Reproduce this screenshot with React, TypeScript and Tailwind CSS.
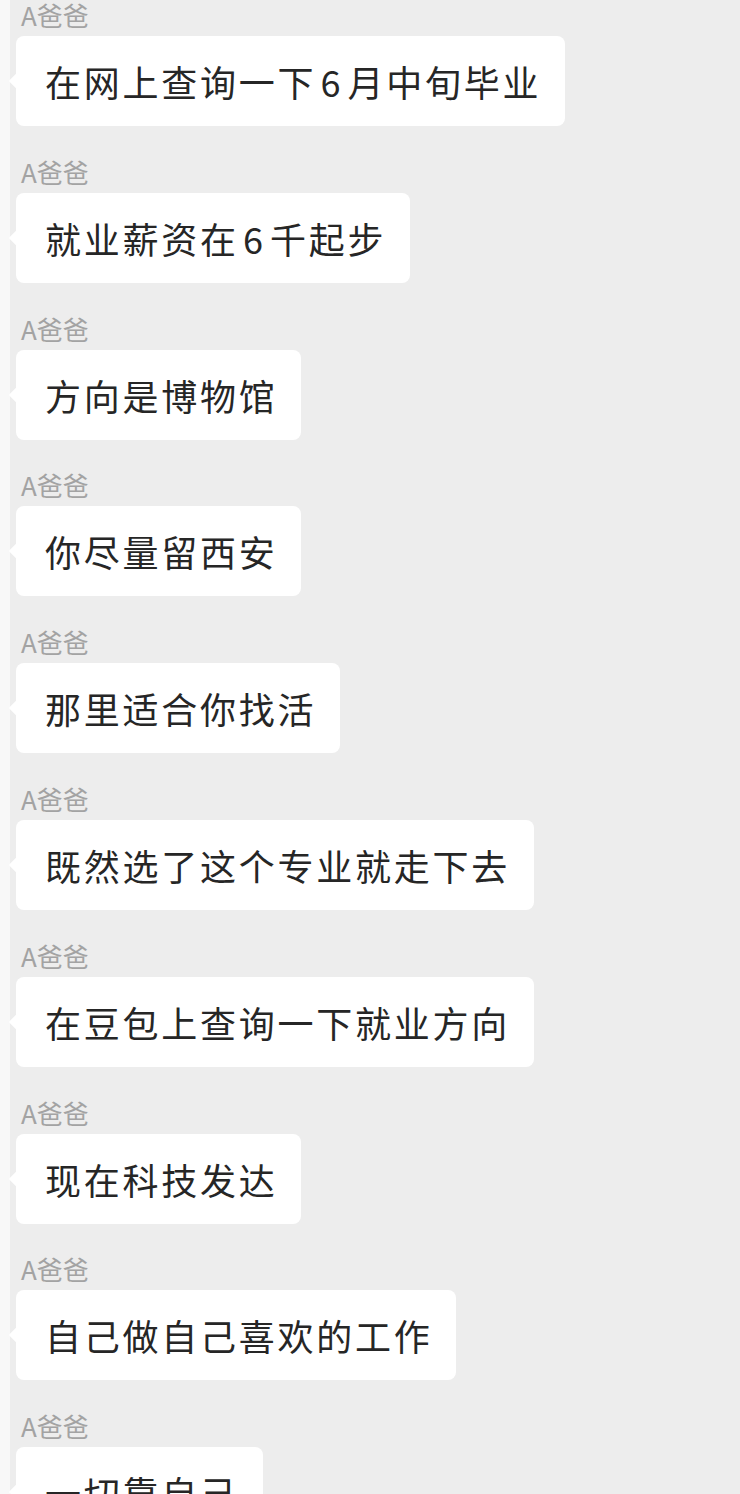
const messages = [
  '在网上查询一下6月中旬毕业',
  '就业薪资在6千起步',
  '方向是博物馆',
  '你尽量留西安',
  '那里适合你找活',
  '既然选了这个专业就走下去',
  '在豆包上查询一下就业方向',
  '现在科技发达',
  '自己做自己喜欢的工作',
  '一切靠自己'
];

// digits sit a little apart from the hanzi around them
function renderText(text: string) {
  return text.split(/(\d+)/).map((part, i) =>
    /^\d+$/.test(part) ? (
      <span key={i} className="px-[4.25px]">
        {part}
      </span>
    ) : (
      <span key={i}>{part}</span>
    )
  );
}

function Message({ text }: { text: string }) {
  return (
    <div className="flex flex-col items-start">
      <div className="h-[30px] pl-[5px] text-[26px] leading-[30px] text-[#a3a3a3]">A爸爸</div>
      <div className="relative mt-[6px] flex h-[90px] items-center rounded-[8px] bg-white pl-[29px] pr-[23.75px]">
        <span className="absolute left-[-5px] top-1/2 h-[11px] w-[11px] -translate-y-1/2 rotate-45 bg-white" />
        <span className="relative text-[36px] leading-none tracking-[2.75px] text-[#262626]">
          {renderText(text)}
        </span>
      </div>
    </div>
  );
}

export default function App() {
  return (
    <div
      className="flex h-[1494px] w-[740px] overflow-hidden bg-[#ededed]"
      style={{ fontFamily: '"Noto Sans CJK SC", "Noto Sans", sans-serif' }}
    >
      <div className="w-[10px] shrink-0 bg-[#f8f8f8]" />
      <div className="flex flex-1 flex-col gap-[30.8px] pl-[6px]">
        {messages.map((m, i) => (
          <Message key={i} text={m} />
        ))}
      </div>
    </div>
  );
}
